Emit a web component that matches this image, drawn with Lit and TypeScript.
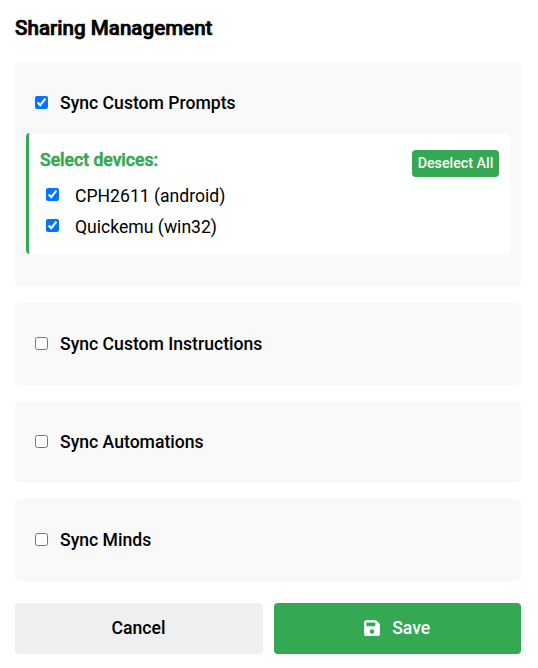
import { LitElement, html, css } from "lit";
import { customElement, state } from "lit/decorators.js";

interface Device { name: string; on: boolean; }
interface Section { label: string; on: boolean; devices: Device[]; }

@customElement("app-root")
class AppRoot extends LitElement {
  @state() private sections: Section[] = [
    { label: "Sync Custom Prompts", on: true, devices: [
      { name: "CPH2611 (android)", on: true },
      { name: "Quickemu (win32)", on: true },
    ] },
    { label: "Sync Custom Instructions", on: false, devices: [] },
    { label: "Sync Automations", on: false, devices: [] },
    { label: "Sync Minds", on: false, devices: [] },
  ];

  static styles = css`
    :host { display: block; box-sizing: border-box; height: 668px; padding: 15px 17px 14px 15px; background: #fff; color: #000; font-family: Roboto, sans-serif; font-size: 17.6px; overflow: hidden; }
    * { box-sizing: border-box; }
    h2 { margin: 0 0 21px; font-size: 20.6px; line-height: 26px; font-weight: 500; -webkit-text-stroke: 0.7px currentColor; }
    .card { height: 82px; margin-bottom: 16px; padding: 20px 11px; background: #f9f9f9; border-radius: 4px; }
    .card.open { height: 225px; }
    .row { display: flex; align-items: center; height: 41px; padding-left: 9px; font-weight: 500; }
    input { width: 13px; height: 13px; margin: 0 12px 0 0; flex: none; }
    .devices { margin-top: 10px; height: 121px; padding: 17px 11px 0; background: #fff; border-left: 3px solid #34a853; border-radius: 4px; }
    .head { display: flex; justify-content: space-between; height: 30px; }
    .title { color: #34a853; font-weight: 500; line-height: 20px; -webkit-text-stroke: 0.6px currentColor; }
    button { border: 0; padding: 0; font: inherit; font-weight: 500; border-radius: 4px; }
    .toggle { width: 87px; height: 27px; padding-bottom: 1px; background: #34a853; color: #fff; font-size: 14.25px; }
    .device { display: flex; align-items: center; height: 31px; padding-left: 6px; }
    .device input { margin: -2px 16px 0 0; }
    .actions { display: grid; grid-template-columns: 248px 247px; gap: 11px; margin-top: 22px; }
    .actions button { display: flex; align-items: center; justify-content: center; height: 51px; padding: 0 1px 1px 0; background: #efefef; color: #000; }
    .actions .save { background: #34a853; color: #fff; gap: 12.5px; }
    svg { width: 16px; height: 18px; }
  `;

  private toggle(item: { on: boolean }) {
    item.on = !item.on;
    this.requestUpdate();
  }

  private toggleAll(s: Section) {
    const next = !s.devices.every((d) => d.on);
    s.devices.forEach((d) => (d.on = next));
    this.requestUpdate();
  }

  render() {
    return html`
      <h2>Sharing Management</h2>
      ${this.sections.map((s) => html`
        <section class="card ${s.on && s.devices.length ? "open" : ""}">
          <label class="row"><input type="checkbox" .checked=${s.on} @change=${() => this.toggle(s)} />${s.label}</label>
          ${s.on && s.devices.length ? html`
            <div class="devices">
              <div class="head">
                <span class="title">Select devices:</span>
                <button class="toggle" @click=${() => this.toggleAll(s)}>${s.devices.every((d) => d.on) ? "Deselect All" : "Select All"}</button>
              </div>
              ${s.devices.map((d) => html`<label class="device"><input type="checkbox" .checked=${d.on} @change=${() => this.toggle(d)} />${d.name}</label>`)}
            </div>` : ""}
        </section>`)}
      <div class="actions">
        <button>Cancel</button>
        <button class="save">
          <svg viewBox="0 0 448 512" fill="currentColor"><path fill-rule="evenodd" d="M48 32C21.500 32 0 53.500 0 80v352c0 26.500 21.500 48 48 48h352c26.500 0 48-21.500 48-48V163.900c0-12.700-5.100-25-14.100-34l-83.800-83.800A48 48 0 0 0 316.100 32H48zm32 64h224c8.800 0 16 7.200 16 16v80c0 8.800-7.200 16-16 16H80c-8.800 0-16-7.200-16-16v-80c0-8.800 7.200-16 16-16zm144 192a64 64 0 1 1 0 128 64 64 0 1 1 0-128z" /></svg>
          Save
        </button>
      </div>
    `;
  }
}
